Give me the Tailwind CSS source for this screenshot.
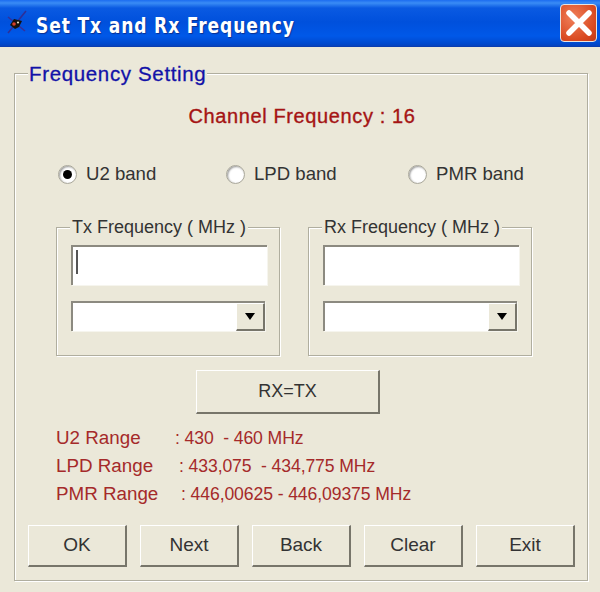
<!DOCTYPE html>
<html>
<head>
<meta charset="utf-8">
<script src="https://cdn.jsdelivr.net/npm/@tailwindcss/browser@4"></script>
</head>
<body class="w-[600px] h-[592px] overflow-hidden bg-[#ebe8d9] [font-family:'Liberation_Sans',sans-serif]">
  <!-- title bar -->
  <div class="h-[47px] flex items-center pl-[5px] pr-[3px] border-b border-[#0a3db0] bg-[linear-gradient(to_bottom,#1c6cf0_0px,#3a8cf5_3px,#0a5ae2_8px,#0050dc_22px,#0058e8_36px,#0048cc_44px,#0a3fb4_47px)]">
    <svg class="w-[24px] h-[28px] shrink-0" viewBox="0 0 24 28">
      <path d="M3 24L21 2" stroke="#2f2f96" stroke-width="1.6"/>
      <path d="M3 8L20 22" stroke="#34309a" stroke-width="1.6"/>
      <path d="M5 16L9 10l8 2-3 6-4 2z" fill="#16120f"/>
      <circle cx="9" cy="15" r="1.8" fill="#d8402a"/>
      <circle cx="13" cy="13.5" r="1.1" fill="#e6e0c0"/>
    </svg>
    <span class="ml-[7px] mt-[6px] text-white font-bold text-[21px] leading-none tracking-[1.05px] [font-family:'DejaVu_Sans',sans-serif] [text-shadow:1px_1px_1px_#0a2f90] scale-x-[0.815] origin-left whitespace-nowrap">Set Tx and Rx Frequency</span>
    <button class="ml-auto w-[37px] h-[38px] rounded-[4px] border border-[#e8e4e0] bg-[radial-gradient(circle_at_35%_35%,#f0805a,#d9481f_70%,#c23a18)] flex items-center justify-center">
      <svg class="w-[30px] h-[30px]" viewBox="0 0 30 30"><path d="M5 5L25 25M25 5L5 25" stroke="#fff" stroke-width="5.5" stroke-linecap="round"/></svg>
    </button>
  </div>

  <!-- main group -->
  <div class="pt-[26px] pl-[14px]">
    <div class="relative w-[574px] h-[508px] border border-[#b0ae9f] shadow-[inset_1px_1px_0_#fff,1px_1px_0_#fff] px-[41px] pt-[29px]">
      <span class="absolute left-[13px] -top-[12px] px-[1px] bg-[#ebe8d9] text-[#1212a8] text-[20.5px] leading-[24px] tracking-[0.65px] [-webkit-text-stroke:0.3px_#1212a8] whitespace-nowrap">Frequency Setting</span>

      <div class="text-center text-[#a51414] text-[20px] leading-[26px] tracking-[0.62px] [-webkit-text-stroke:0.35px_#a51414] -ml-[41px] w-[572px] pl-[2px]">Channel Frequency : 16</div>

      <!-- radios -->
      <div class="flex items-center mt-[33px] h-[24px] text-[#333] text-[18.6px]">
        <div class="flex items-center w-[170px] pl-[2px]">
          <span class="w-[19px] h-[19px] rounded-full bg-white border border-[#a9a79a] flex items-center justify-center shadow-[inset_1px_1px_2px_#999]"><span class="w-[9px] h-[9px] rounded-full bg-black"></span></span>
          <span class="ml-[9px]">U2 band</span>
        </div>
        <div class="flex items-center w-[182px]">
          <span class="w-[19px] h-[19px] rounded-full bg-white border border-[#a9a79a] shadow-[inset_1px_1px_2px_#999]"></span>
          <span class="ml-[9px]">LPD band</span>
        </div>
        <div class="flex items-center">
          <span class="w-[19px] h-[19px] rounded-full bg-white border border-[#a9a79a] shadow-[inset_1px_1px_2px_#999]"></span>
          <span class="ml-[9px]">PMR band</span>
        </div>
      </div>

      <!-- Tx / Rx groups -->
      <div class="flex gap-[28px] mt-[41px]">
        <div class="relative w-[224px] h-[129px] border border-[#b0ae9f] shadow-[inset_1px_1px_0_#fff,1px_1px_0_#fff] pl-[14px] pt-[17px]">
          <span class="absolute left-[13px] -top-[11px] px-[2px] bg-[#ebe8d9] text-[#333] text-[18px] leading-[21px] whitespace-nowrap">Tx Frequency ( MHz )</span>
          <div class="w-[196px] h-[40px] bg-white border-t-2 border-l-2 border-t-[#8c8a80] border-l-[#8c8a80] shadow-[1px_1px_0_#f6f5ee] pl-[3px] pt-[3px]"><div class="w-[2px] h-[24px] bg-[#555]"></div></div>
          <div class="mt-[16px] w-[194px] h-[30px] bg-white border-t-2 border-l-2 border-t-[#8c8a80] border-l-[#8c8a80] shadow-[1px_1px_0_#f6f5ee] flex justify-end">
            <div class="w-[29px] h-[28px] bg-[#ebe8d9] border-r-2 border-b-2 border-r-[#77756a] border-b-[#77756a] border-l border-t border-l-white border-t-white flex items-center justify-center">
              <svg class="w-[14px] h-[8px]" viewBox="0 0 14 8"><path d="M2 0h10L7 7z" fill="#000"/></svg>
            </div>
          </div>
        </div>
        <div class="relative w-[224px] h-[129px] border border-[#b0ae9f] shadow-[inset_1px_1px_0_#fff,1px_1px_0_#fff] pl-[14px] pt-[17px]">
          <span class="absolute left-[13px] -top-[11px] px-[2px] bg-[#ebe8d9] text-[#333] text-[18px] leading-[21px] whitespace-nowrap">Rx Frequency ( MHz )</span>
          <div class="w-[196px] h-[40px] bg-white border-t-2 border-l-2 border-t-[#8c8a80] border-l-[#8c8a80] shadow-[1px_1px_0_#f6f5ee]"></div>
          <div class="mt-[16px] w-[194px] h-[30px] bg-white border-t-2 border-l-2 border-t-[#8c8a80] border-l-[#8c8a80] shadow-[1px_1px_0_#f6f5ee] flex justify-end">
            <div class="w-[29px] h-[28px] bg-[#ebe8d9] border-r-2 border-b-2 border-r-[#77756a] border-b-[#77756a] border-l border-t border-l-white border-t-white flex items-center justify-center">
              <svg class="w-[14px] h-[8px]" viewBox="0 0 14 8"><path d="M2 0h10L7 7z" fill="#000"/></svg>
            </div>
          </div>
        </div>
      </div>

      <!-- RX=TX -->
      <button class="block ml-[140px] mt-[14px] w-[184px] h-[44px] bg-[#ebe8d9] border-r-2 border-b-2 border-r-[#77756a] border-b-[#77756a] border-l border-t border-l-white border-t-white text-[#333] text-[18px]">RX=TX</button>

      <!-- ranges -->
      <div class="mt-[10px] text-[#a52a2a] text-[18.8px] leading-[28px]">
        <div class="flex"><span class="w-[119px]">U2 Range</span><span class="text-[17.6px] tracking-[-0.1px]">: 430&nbsp; - 460 MHz</span></div>
        <div class="flex"><span class="w-[123px]">LPD Range</span><span class="text-[17.6px] tracking-[-0.1px]">: 433,075&nbsp; - 434,775 MHz</span></div>
        <div class="flex"><span class="w-[125px]">PMR Range</span><span class="text-[17.6px] tracking-[-0.1px]">: 446,00625 - 446,09375 MHz</span></div>
      </div>

      <!-- bottom buttons -->
      <div class="flex gap-[13px] -ml-[28px] mt-[17px]">
        <button class="w-[99px] shrink-0 h-[42px] bg-[#ebe8d9] border-r-2 border-b-2 border-r-[#77756a] border-b-[#77756a] border-l border-t border-l-white border-t-white text-[#333] text-[19px]">OK</button>
        <button class="w-[99px] shrink-0 h-[42px] bg-[#ebe8d9] border-r-2 border-b-2 border-r-[#77756a] border-b-[#77756a] border-l border-t border-l-white border-t-white text-[#333] text-[19px]">Next</button>
        <button class="w-[99px] shrink-0 h-[42px] bg-[#ebe8d9] border-r-2 border-b-2 border-r-[#77756a] border-b-[#77756a] border-l border-t border-l-white border-t-white text-[#333] text-[19px]">Back</button>
        <button class="w-[99px] shrink-0 h-[42px] bg-[#ebe8d9] border-r-2 border-b-2 border-r-[#77756a] border-b-[#77756a] border-l border-t border-l-white border-t-white text-[#333] text-[19px]">Clear</button>
        <button class="w-[99px] shrink-0 h-[42px] bg-[#ebe8d9] border-r-2 border-b-2 border-r-[#77756a] border-b-[#77756a] border-l border-t border-l-white border-t-white text-[#333] text-[19px]">Exit</button>
      </div>
    </div>
  </div>
</body>
</html>
